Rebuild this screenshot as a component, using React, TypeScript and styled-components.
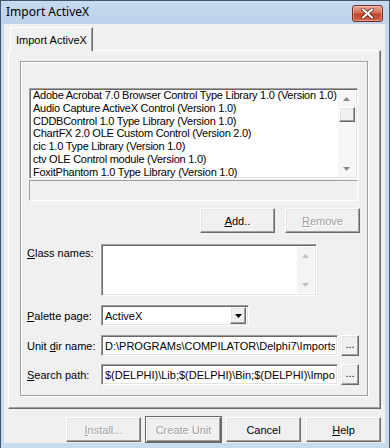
import React from 'react';
import styled, { createGlobalStyle, css } from 'styled-components';

const GlobalStyle = createGlobalStyle`
  html, body {
    margin: 0;
    padding: 0;
    background: #c6d9ee;
  }
  body {
    font-family: "Liberation Sans", Arial, sans-serif;
    font-size: 11px;
    color: #000;
  }
  * {
    box-sizing: border-box;
  }
`;

const raised = css`
  border-top: 1px solid #ffffff;
  border-left: 1px solid #ffffff;
  border-right: 1px solid #696969;
  border-bottom: 1px solid #696969;
  box-shadow: inset -1px -1px #a0a0a0, inset 1px 1px #e3e3e3;
`;

const sunken = css`
  border-top: 1px solid #a0a0a0;
  border-left: 1px solid #a0a0a0;
  border-right: 1px solid #ffffff;
  border-bottom: 1px solid #ffffff;
  box-shadow: inset 1px 1px #696969, inset -1px -1px #e3e3e3;
`;

const Window = styled.div`
  width: 390px;
  height: 448px;
  border: 1px solid #44566b;
  border-bottom: none;
  background: #c9dbef;
  padding: 0 4px 0 3px;
  display: flex;
  flex-direction: column;
`;

const TitleBar = styled.div`
  height: 23px;
  margin: 0 -4px 0 -3px;
  padding: 0 5px 3px 5px;
  background: linear-gradient(#c6daf0, #bcd2ea);
  display: flex;
  align-items: center;
  justify-content: space-between;
  font-family: "Noto Sans", "Open Sans", sans-serif;
  font-size: 12px;
`;

const CloseButton = styled.div`
  width: 31px;
  height: 17px;
  margin-top: 5px;
  margin-right: 1px;
  border: 1px solid #7a2a1e;
  border-radius: 3px;
  background: linear-gradient(#e8a593, #d3715a 45%, #c0432b 55%, #cf6a4e);
  display: flex;
  align-items: center;
  justify-content: center;
  box-shadow: inset 0 0 0 1px rgba(255, 255, 255, 0.35);
`;

const Client = styled.div`
  width: 381px;
  height: 419px;
  background: #f0f0f0;
  padding: 3px 0 0 4px;
  display: flex;
  flex-direction: column;
`;

const TabStrip = styled.div`
  display: flex;
  padding-left: 2px;
  position: relative;
  z-index: 1;
`;

const Tab = styled.div`
  width: 83px;
  height: 24px;
  background: #f0f0f0;
  border-top: 1px solid #ffffff;
  border-left: 1px solid #ffffff;
  border-right: 1px solid #696969;
  box-shadow: inset -1px 0 #a0a0a0;
  padding: 6px 0 0 5px;
  margin-bottom: -1px;
`;

const TabPage = styled.div`
  width: 373px;
  height: 359px;
  border-top: 1px solid #ffffff;
  border-left: 1px solid #ffffff;
  border-right: 1px solid #696969;
  border-bottom: 1px solid #696969;
  box-shadow: inset -1px -1px #a0a0a0;
  padding: 10px 0 0 11px;
`;

const Panel = styled.div`
  width: 348px;
  height: 335px;
  border: 1px solid #a0a0a0;
  box-shadow: 1px 1px #ffffff, inset 1px 1px #ffffff;
  padding: 26px 0 0 6px;
  display: flex;
  flex-direction: column;
`;

const ListBox = styled.div`
  width: 329px;
  height: 91px;
  margin-left: 2px;
  background: #ffffff;
  ${sunken};
  padding: 0 2px;
  display: flex;
`;

const ListItems = styled.div`
  flex: 1;
  min-width: 0;
  overflow: hidden;
  padding-left: 1px;
`;

const ListItem = styled.div`
  height: 12.75px;
  line-height: 12.75px;
  white-space: nowrap;
  overflow: hidden;
  letter-spacing: -0.25px;
`;

const ScrollBar = styled.div`
  width: 17px;
  margin: 1px 0;
  background: #f6f6f6;
  display: flex;
  flex-direction: column;
  align-items: center;
`;

const ArrowCell = styled.div`
  width: 17px;
  height: 17px;
  display: flex;
  align-items: center;
  justify-content: center;
`;

const Thumb = styled.div`
  width: 16px;
  height: 15px;
  background: #f0f0f0;
  ${raised};
`;

const ScrollSpacer = styled.div`
  flex: 1;
`;

const StatusPanel = styled.div`
  width: 329px;
  height: 21px;
  margin: 1px 0 0 2px;
  border-top: 1px solid #a0a0a0;
  border-left: 1px solid #a0a0a0;
  border-right: 1px solid #ffffff;
  border-bottom: 1px solid #ffffff;
`;

const ActionRow = styled.div`
  display: flex;
  justify-content: flex-end;
  gap: 10px;
  margin: 7px 0 0 0;
  padding-right: 7px;
`;

const Button = styled.div<{ $disabled?: boolean; $default?: boolean; $w?: number }>`
  width: ${(p) => p.$w ?? 75}px;
  height: 25px;
  background: #f0f0f0;
  ${raised};
  display: flex;
  align-items: center;
  justify-content: center;
  white-space: nowrap;
  ${(p) =>
    p.$disabled &&
    css`
      color: #a0a0a0;
      text-shadow: 1px 1px #ffffff;
    `}
  ${(p) =>
    p.$default &&
    css`
      outline: 1px solid #696969;
      outline-offset: 0;
    `}
`;

const FieldRow = styled.div<{ $top: number }>`
  display: flex;
  align-items: center;
  margin-top: ${(p) => p.$top}px;
`;

const FieldLabel = styled.div<{ $alignTop?: boolean }>`
  width: 74px;
  white-space: nowrap;
  align-self: ${(p) => (p.$alignTop ? 'flex-start' : 'center')};
  padding-top: ${(p) => (p.$alignTop ? '3px' : '0')};
`;

const Memo = styled.div`
  width: 216px;
  height: 52px;
  background: #ffffff;
  ${sunken};
  padding: 2px;
  display: flex;
  justify-content: flex-end;
`;

const MemoScroll = styled.div`
  width: 17px;
  background: #f4f4f4;
  display: flex;
  flex-direction: column;
  justify-content: space-between;
`;

const Combo = styled.div`
  width: 148px;
  height: 21px;
  background: #ffffff;
  ${sunken};
  padding: 2px;
  display: flex;
  align-items: center;
`;

const ComboText = styled.div`
  flex: 1;
  padding-left: 1px;
`;

const DropButton = styled.div`
  width: 16px;
  height: 17px;
  background: #f0f0f0;
  ${raised};
  display: flex;
  align-items: center;
  justify-content: center;
`;

const Edit = styled.div`
  width: 237px;
  height: 21px;
  background: #ffffff;
  ${sunken};
  padding: 0 2px 0 3px;
  display: flex;
  align-items: center;
  overflow: hidden;
`;

const EditText = styled.span`
  flex: 1;
  min-width: 0;
  overflow: hidden;
  white-space: nowrap;
`;

const EllipsisButton = styled(Button)`
  margin-left: 3px;
  height: 21px;
  padding-bottom: 4px;
`;

const BottomRow = styled.div`
  display: flex;
  justify-content: flex-end;
  gap: 5px;
  margin-top: 8px;
  padding-right: 4px;
`;

const Arrow = ({ dir, color }: { dir: 'up' | 'down'; color: string }) => (
  <svg width="7" height="4" viewBox="0 0 7 4">
    {dir === 'up' ? (
      <polygon points="3.5,0 7,4 0,4" fill={color} />
    ) : (
      <polygon points="0,0 7,0 3.5,4" fill={color} />
    )}
  </svg>
);

const items = [
  'Adobe Acrobat 7.0 Browser Control Type Library 1.0 (Version 1.0)',
  'Audio Capture ActiveX Control (Version 1.0)',
  'CDDBControl 1.0 Type Library (Version 1.0)',
  'ChartFX 2.0 OLE Custom Control (Version 2.0)',
  'cic 1.0 Type Library (Version 1.0)',
  'ctv OLE Control module (Version 1.0)',
  'FoxitPhantom 1.0 Type Library (Version 1.0)',
];

export default function App() {
  return (
    <>
      <GlobalStyle />
      <Window>
        <TitleBar>
          <span>Import ActiveX</span>
          <CloseButton>
            <svg width="13" height="11" viewBox="0 0 13 11">
              <path
                d="M2 1.5 L11 9.5 M11 1.5 L2 9.5"
                stroke="#5a1a12"
                strokeWidth="3.6"
                strokeLinecap="round"
              />
              <path
                d="M2 1.5 L11 9.5 M11 1.5 L2 9.5"
                stroke="#ffffff"
                strokeWidth="2.2"
                strokeLinecap="round"
              />
            </svg>
          </CloseButton>
        </TitleBar>
        <Client>
          <TabStrip>
            <Tab>Import ActiveX</Tab>
          </TabStrip>
          <TabPage>
            <Panel>
              <ListBox>
                <ListItems>
                  {items.map((it) => (
                    <ListItem key={it}>{it}</ListItem>
                  ))}
                </ListItems>
                <ScrollBar>
                  <ArrowCell>
                    <Arrow dir="up" color="#8a8a8a" />
                  </ArrowCell>
                  <Thumb />
                  <ScrollSpacer />
                  <ArrowCell>
                    <Arrow dir="down" color="#8a8a8a" />
                  </ArrowCell>
                </ScrollBar>
              </ListBox>
              <StatusPanel />
              <ActionRow>
                <Button>
                  <u>A</u>dd..
                </Button>
                <Button $disabled>
                  <u>R</u>emove
                </Button>
              </ActionRow>
              <FieldRow $top={11}>
                <FieldLabel $alignTop>
                  <u>C</u>lass names:
                </FieldLabel>
                <Memo>
                  <MemoScroll>
                    <ArrowCell>
                      <Arrow dir="up" color="#c0c0c0" />
                    </ArrowCell>
                    <ArrowCell>
                      <Arrow dir="down" color="#c0c0c0" />
                    </ArrowCell>
                  </MemoScroll>
                </Memo>
              </FieldRow>
              <FieldRow $top={9}>
                <FieldLabel>
                  <u>P</u>alette page:
                </FieldLabel>
                <Combo>
                  <ComboText>ActiveX</ComboText>
                  <DropButton>
                    <Arrow dir="down" color="#000000" />
                  </DropButton>
                </Combo>
              </FieldRow>
              <FieldRow $top={9}>
                <FieldLabel>
                  Unit <u>d</u>ir name:
                </FieldLabel>
                <Edit>
                  <EditText>D:\PROGRAMs\COMPILATOR\Delphi7\Imports\</EditText>
                </Edit>
                <EllipsisButton $w={18}>...</EllipsisButton>
              </FieldRow>
              <FieldRow $top={8}>
                <FieldLabel>
                  <u>S</u>earch path:
                </FieldLabel>
                <Edit>
                  <EditText>$(DELPHI)\Lib;$(DELPHI)\Bin;$(DELPHI)\Imports</EditText>
                </Edit>
                <EllipsisButton $w={18}>...</EllipsisButton>
              </FieldRow>
            </Panel>
          </TabPage>
          <BottomRow>
            <Button $disabled>
              <u>I</u>nstall...
            </Button>
            <Button $disabled $default>
              Create Unit
            </Button>
            <Button>Cancel</Button>
            <Button>
              <u>H</u>elp
            </Button>
          </BottomRow>
        </Client>
      </Window>
    </>
  );
}
